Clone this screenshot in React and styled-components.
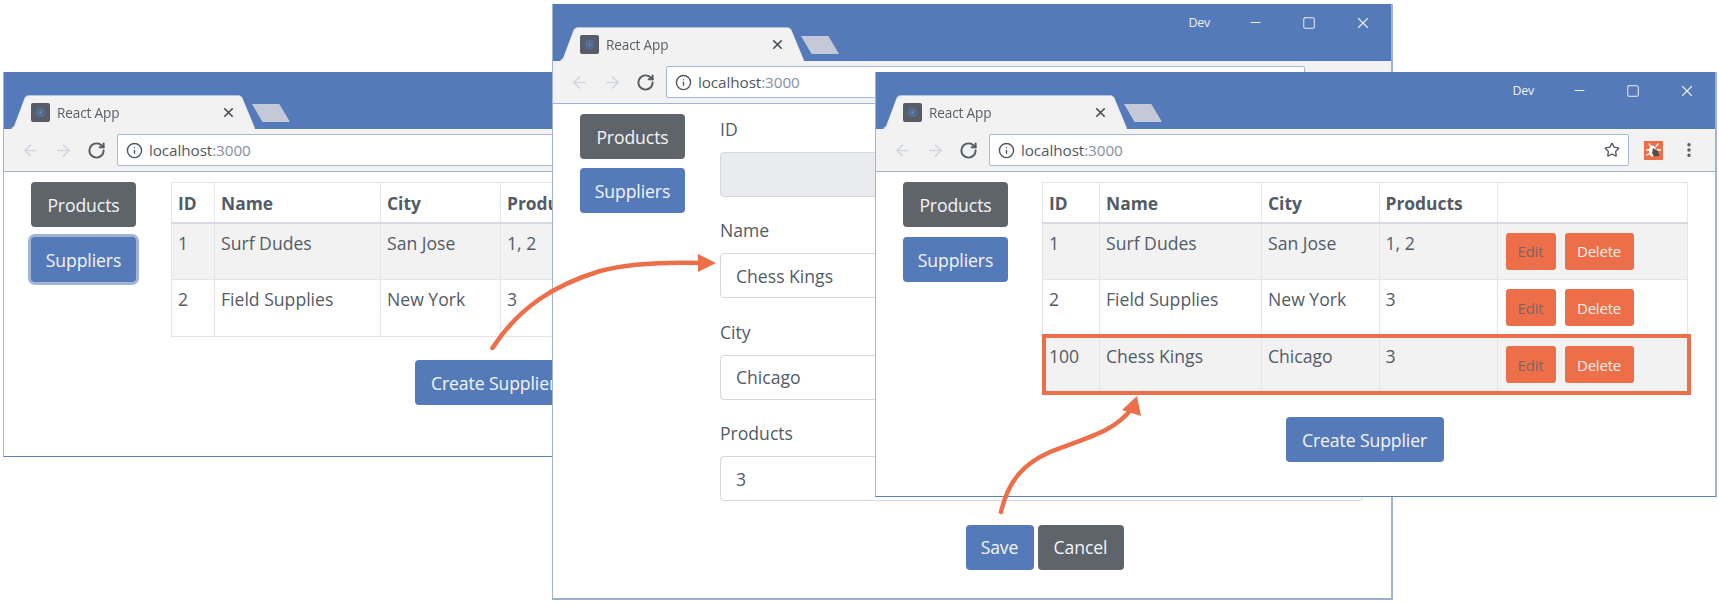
import React from "react";
import styled, { createGlobalStyle } from "styled-components";
import { ArrowLeft, ArrowRight, RotateCw, Info, Star, X, Minus, Square, EllipsisVertical } from "lucide-react";

const Global = createGlobalStyle`
  html, body { margin: 0; padding: 0; background: #fff; overflow: hidden; }
  body { font-family: "Open Sans", "Noto Sans", sans-serif; color: #525b66; }
  * { box-sizing: border-box; }
`;

const BLUE = "#557ab9";
const GRAY = "#5f646b";
const ORANGE = "#ec6f4a";
const EDGE = "#a3b4d2";

const Desktop = styled.div`
  position: relative;
  width: 1719px;
  height: 603px;
  overflow: hidden;
  background: #fff;
`;

const Win = styled.section`
  position: absolute;
  left: ${p => p.$x}px;
  top: ${p => p.$y}px;
  width: ${p => p.$w}px;
  height: ${p => p.$h}px;
  display: flex;
  flex-direction: column;
  background: #fff;
  border: 1px solid ${EDGE};
  border-right-width: 2px;
  border-bottom: ${p => p.$thick ? 2 : 1}px solid ${p => p.$thick ? "#9dafc9" : "#5c80bf"};
  border-top: none;
`;

const TitleBar = styled.header`
  height: 57px;
  flex: none;
  display: flex;
  background: ${BLUE};
  padding-left: 7px;
`;

const TabEdge = styled.div`
  align-self: flex-end;
  filter: drop-shadow(0 -1px 0 #b4c3dd);
`;

const Tab = styled.div`
  width: 244px;
  height: 33px;
  display: flex;
  align-items: center;
  padding: 0 19px 0 20px;
  background: #f2f2f2;
  clip-path: polygon(0 100%, 3px 94%, 14px 5%, 17px 0, 228px 0, 231px 5%, 100% 100%);
  font-size: 13.6px;
  letter-spacing: -0.15px;
  color: #555d67;
`;

const Favicon = styled.svg`
  width: 19px;
  height: 19px;
  flex: none;
  margin-right: 7px;
`;

const TabTitle = styled.span`
  flex: 1;
  white-space: nowrap;
`;

const TabClose = styled(X)`
  color: #454c55;
`;

const NewTab = styled.div`
  align-self: flex-end;
  width: 38px;
  height: 18px;
  margin: 0 0 7px -3px;
  background: #c3c9d6;
  clip-path: polygon(0 0, 72% 0, 100% 100%, 28% 100%);
`;

const WinControls = styled.div`
  margin-left: auto;
  display: flex;
  align-items: center;
  height: 37px;
  padding-right: 1px;
  color: #eef1f7;
`;

const DevLabel = styled.span`
  font-size: 12.4px;
  letter-spacing: -0.2px;
  margin-right: 18px;
`;

const WinButton = styled.span`
  width: 54px;
  display: flex;
  justify-content: center;
`;

const ToolBar = styled.div`
  height: 43px;
  flex: none;
  display: flex;
  align-items: center;
  padding: 0 17px 0 10px;
  background: #f2f2f2;
  border-bottom: 1px solid ${EDGE};
`;

const NavIcon = styled.span`
  width: 33px;
  display: flex;
  justify-content: center;
  color: ${p => p.$off ? "#d2d6de" : "#575c63"};
`;

const UrlBox = styled.div`
  flex: 1;
  height: 32px;
  margin-left: 4px;
  display: flex;
  align-items: center;
  padding: 0 8px 0 8px;
  background: #fff;
  border: 1px solid #a9b8d4;
  border-radius: 2px;
  font-size: 15.3px;
  letter-spacing: -0.1px;
  color: #525860;
`;

const UrlText = styled.span`
  margin-left: 6px;
  flex: 1;
`;

const UrlPort = styled.span`
  color: #8590a4;
`;

const ExtIcon = styled.svg`
  width: 19px;
  height: 19px;
  margin-left: 15px;
  flex: none;
`;

const MenuIcon = styled.span`
  margin-left: 17px;
  display: flex;
  color: #555b63;
`;

const Body = styled.div`
  flex: 1;
  display: grid;
  grid-template-columns: ${p => p.$gutter}px 645px;
  align-content: start;
  padding-top: 10px;
`;

const Sidebar = styled.nav`
  display: flex;
  flex-direction: column;
  gap: ${p => p.$gap}px;
  padding-left: 27px;
  width: 132px;
`;

const Button = styled.button`
  height: 45px;
  width: ${p => p.$w ? `${p.$w}px` : "auto"};
  padding: 0;
  border: none;
  border-radius: 4px;
  background: ${p => p.$gray ? GRAY : BLUE};
  color: #f3f5f9;
  font: 400 17.6px "Open Sans", sans-serif;
  letter-spacing: -0.1px;
  box-shadow: ${p => p.$focus ? "0 0 0 3px #a2b4d3" : "none"};
`;

const Main = styled.main`
  display: flex;
  flex-direction: column;
`;

const Table = styled.table`
  width: 645px;
  table-layout: fixed;
  border-collapse: collapse;
  font-size: 17.6px;
  line-height: 26px;
`;

const Col = styled.col`
  width: ${p => p.$w}px;
`;

const Th = styled.th`
  height: 40px;
  padding: 2px 6px 0;
  text-align: left;
  font-weight: 700;
  font-size: 17.4px;
  border: 1px solid #e6e7ea;
  border-bottom: 2px solid #d6d9df;
`;

const Row = styled.tr`
  background: ${p => p.$odd ? "#f2f2f2" : "#fff"};
`;

const Td = styled.td`
  height: 57px;
  padding: 6px 6px 0;
  vertical-align: top;
  border: 1px solid #e3e4e7;
  white-space: nowrap;
`;

const ActionCell = styled.div`
  display: flex;
  gap: 9px;
  padding: 3px 0 0 2px;
`;

const RowButton = styled.button`
  height: 37px;
  width: ${p => p.$w}px;
  padding: 0;
  border: none;
  border-radius: 3px;
  background: ${ORANGE};
  color: ${p => p.$dim ? "#7e6660" : "#fbeee9"};
  font: 400 15px "Open Sans", sans-serif;
  letter-spacing: -0.2px;
`;

const Centered = styled.div`
  display: flex;
  justify-content: center;
  margin-top: ${p => p.$top}px;
  padding-left: ${p => p.$pad || 0}px;
  gap: 4px;
`;

const Form = styled.div`
  display: flex;
  flex-direction: column;
  width: 643px;
  padding-top: 1px;
`;

const Field = styled.div`
  height: 101.4px;
  display: flex;
  flex-direction: column;
`;

const Label = styled.label`
  font-size: 17.6px;
  line-height: 26px;
  height: 37px;
  padding-top: 1px;
`;

const Input = styled.div`
  height: 45px;
  padding: 0 15px;
  display: flex;
  align-items: center;
  border: 1px solid #d5d8de;
  border-radius: 4px;
  font-size: 17.6px;
  background: ${p => p.$disabled ? "#e9ebee" : "#fff"};
`;

const Highlight = styled.div`
  position: absolute;
  left: 1042px;
  top: 334px;
  width: 649px;
  height: 61px;
  border: 4px solid ${ORANGE};
  pointer-events: none;
`;

const Arrows = styled.svg`
  position: absolute;
  inset: 0;
  pointer-events: none;
`;

const FaviconMark = () => (
  <Favicon viewBox="0 0 19 19">
    <rect width="19" height="19" rx="2" fill="#575c66" />
    <g fill="none" stroke="#4f7fc4" strokeWidth="0.6">
      <ellipse cx="9.5" cy="9.5" rx="5" ry="2" />
      <ellipse cx="9.5" cy="9.5" rx="5" ry="2" transform="rotate(60 9.5 9.5)" />
      <ellipse cx="9.5" cy="9.5" rx="5" ry="2" transform="rotate(120 9.5 9.5)" />
    </g>
    <circle cx="9.5" cy="9.5" r="0.9" fill="#6f9fe0" />
  </Favicon>
);

const BugBadge = () => (
  <ExtIcon viewBox="0 0 19 19">
    <rect width="19" height="19" fill={ORANGE} />
    <g fill="none" stroke="#fff" strokeWidth="1.3" strokeLinecap="round">
      <path d="M5 3 L7 5.5 M14 3 L12 5.5 M2.5 9 H6 M2.5 14 L6 12.5 M13 9 H16.5" />
    </g>
    <ellipse cx="8.5" cy="10" rx="3.5" ry="5.5" fill="#fff" />
    <path d="M9 7 L14 10 L15.5 15 L10 15.5 L8 12 Z" fill="#55504f" />
  </ExtIcon>
);

const Chrome = () => (
  <>
    <TitleBar>
      <TabEdge>
        <Tab>
          <FaviconMark />
          <TabTitle>React App</TabTitle>
          <TabClose size={15} strokeWidth={2.6} />
        </Tab>
      </TabEdge>
      <NewTab />
      <WinControls>
        <DevLabel>Dev</DevLabel>
        <WinButton><Minus size={15} strokeWidth={1.6} /></WinButton>
        <WinButton><Square size={14} strokeWidth={1.7} /></WinButton>
        <WinButton><X size={18} strokeWidth={1.5} /></WinButton>
      </WinControls>
    </TitleBar>
    <ToolBar>
      <NavIcon $off><ArrowLeft size={19} strokeWidth={2} /></NavIcon>
      <NavIcon $off><ArrowRight size={19} strokeWidth={2} /></NavIcon>
      <NavIcon><RotateCw size={19} strokeWidth={2.5} /></NavIcon>
      <UrlBox>
        <Info size={17} strokeWidth={2} />
        <UrlText>localhost<UrlPort>:3000</UrlPort></UrlText>
        <Star size={16} strokeWidth={2} />
      </UrlBox>
      <BugBadge />
      <MenuIcon><EllipsisVertical size={18} strokeWidth={2.6} /></MenuIcon>
    </ToolBar>
  </>
);

const Side = ({ focus, gap = 10 }) => (
  <Sidebar $gap={gap}>
    <Button $gray>Products</Button>
    <Button $focus={focus}>Suppliers</Button>
  </Sidebar>
);

const suppliers = [
  ["1", "Surf Dudes", "San Jose", "1, 2"],
  ["2", "Field Supplies", "New York", "3"],
  ["100", "Chess Kings", "Chicago", "3"],
];

const SupplierTable = ({ rows, cols }) => (
  <Table>
    <colgroup>{cols.map((w, i) => <Col key={i} $w={w} />)}</colgroup>
    <thead>
      <tr>
        <Th>ID</Th><Th>Name</Th><Th>City</Th><Th>Products</Th><Th />
      </tr>
    </thead>
    <tbody>
      {rows.map((r, i) => (
        <Row key={r[0]} $odd={i % 2 === 0}>
          {r.map((c, j) => <Td key={j}>{c}</Td>)}
          <Td>
            <ActionCell>
              <RowButton $w={50} $dim>Edit</RowButton>
              <RowButton $w={69}>Delete</RowButton>
            </ActionCell>
          </Td>
        </Row>
      ))}
    </tbody>
  </Table>
);

const fields = [
  ["ID", "", true],
  ["Name", "Chess Kings"],
  ["City", "Chicago"],
  ["Products", "3"],
];

export default function App() {
  return (
    <Desktop>
      <Global />
      <Win $x={3} $y={72} $w={845} $h={385}>
        <Chrome />
        <Body $gutter={167}>
          <Side focus />
          <Main>
            <SupplierTable rows={suppliers.slice(0, 2)} cols={[43, 166, 120, 125, 191]} />
            <Centered $top={23}><Button $w={158}>Create Supplier</Button></Centered>
          </Main>
        </Body>
      </Win>
      <Win $x={552} $y={4} $w={841} $h={596} $thick>
        <Chrome />
        <Body $gutter={167}>
          <Side gap={9} />
          <Form>
            {fields.map(([label, value, disabled]) => (
              <Field key={label}>
                <Label>{label}</Label>
                <Input $disabled={disabled}>{value}</Input>
              </Field>
            ))}
            <Centered $top={4} $pad={6}>
              <Button $w={68}>Save</Button>
              <Button $w={86} $gray>Cancel</Button>
            </Centered>
          </Form>
        </Body>
      </Win>
      <Win $x={875} $y={72} $w={842} $h={425}>
        <Chrome />
        <Body $gutter={166}>
          <Side />
          <Main>
            <SupplierTable rows={suppliers} cols={[57, 162, 117.5, 118, 190.5]} />
            <Centered $top={23}><Button $w={158}>Create Supplier</Button></Centered>
          </Main>
        </Body>
      </Win>
      <Highlight />
      <Arrows width="1719" height="603" viewBox="0 0 1719 603">
        <g fill="none" stroke={ORANGE} strokeWidth="4.5" strokeLinecap="round">
          <path d="M492.5 348 C520 306 555 285 600 271 C630 263 665 262 702 263" />
          <path d="M1001 512 C1008 480 1025 463 1050 452 C1085 438 1115 432 1132 408" />
        </g>
        <polygon points="716,263 698,254 698,272" fill={ORANGE} />
        <polygon points="1137,396 1122,410 1141,416" fill={ORANGE} />
      </Arrows>
    </Desktop>
  );
}
